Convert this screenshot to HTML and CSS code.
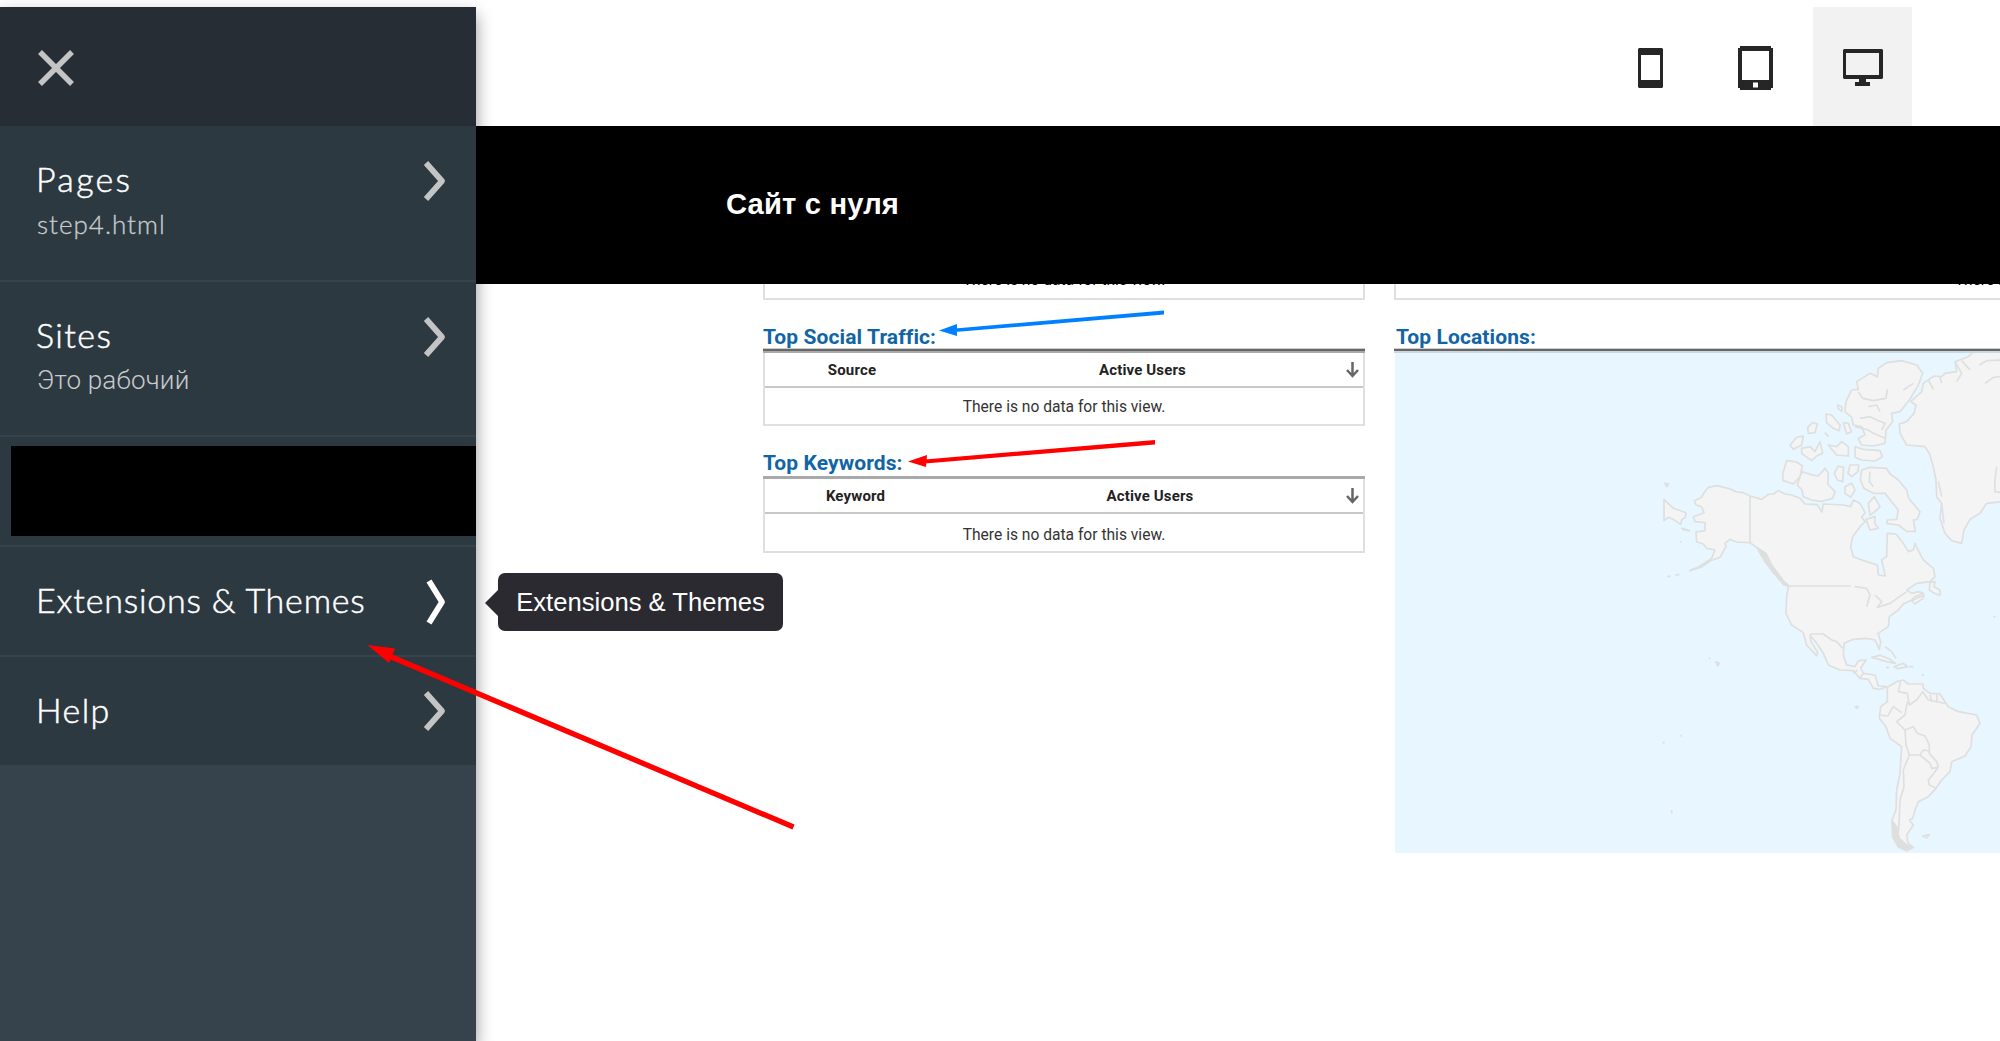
FILE: index.html
```html
<!DOCTYPE html>
<html lang="ru">
<head>
<meta charset="utf-8">
<title>Сайт с нуля</title>
<link rel="stylesheet" href="styles.css">
</head>
<body>
<div class="app">
  <aside class="sidebar">
    <div class="sidebar-head">
      <svg class="close" width="36" height="36" viewBox="0 0 36 36"><path d="M2 2 34 34M34 2 2 34"/></svg>
    </div>
    <nav class="menu">
      <a class="item tall">
        <span class="labels"><span class="name wide">Pages</span><span class="sub">step4.html</span></span>
        <svg class="chevron" width="24" height="42" viewBox="0 0 24 42"><path d="M3 3 19 21 3 39"/></svg>
      </a>
      <a class="item tall second">
        <span class="labels"><span class="name sites">Sites</span><span class="sub cyr">Это рабочий</span></span>
        <svg class="chevron" width="24" height="42" viewBox="0 0 24 42"><path d="M3 3 19 21 3 39"/></svg>
      </a>
      <div class="item blocked"><div class="block"></div></div>
      <a class="item current">
        <span class="name">Extensions &amp; Themes</span>
        <svg class="chevron" width="24" height="48" viewBox="0 0 24 48"><path d="M6 4 19 25 6 46"/></svg>
      </a>
      <a class="item last">
        <span class="name sites">Help</span>
        <svg class="chevron" width="24" height="42" viewBox="0 0 24 42"><path d="M3 3 19 21 3 39"/></svg>
      </a>
    </nav>
  </aside>

  <main class="main">
    <div class="toolbar">
      <div class="device phone"><svg width="25" height="40" viewBox="0 0 25 40"><path fill-rule="evenodd" d="M1 0H24L25 1V39L24 40H1L0 39V1ZM3 7V32H22V7Z"/></svg></div>
      <div class="device tablet"><svg width="35" height="44" viewBox="0 0 35 44"><path fill-rule="evenodd" d="M2 0H33V2H35V42H33V44H2V42H0V2H2ZM4 5V34H31V5ZM15 36.500V41.500H20V36.500Z"/></svg></div>
      <div class="device desktop"><svg width="40" height="37" viewBox="0 0 40 37"><path fill-rule="evenodd" d="M1 0H39L40 1V29L39 30H23V33H27V37H12V33H16V30H1L0 29V1ZM3 4V26H36V4Z"/></svg></div>
    </div>
    <header class="site-header"><h1>Сайт с нуля</h1></header>
    <div class="report">
      <div class="column">
        <div class="card cut"><p>There is no data for this view.</p></div>
        <h2>Top Social Traffic:</h2>
        <div class="card">
          <div class="rule dark"></div>
          <div class="row head"><span class="c1">Source</span><span class="c2">Active Users</span><svg width="13" height="16" viewBox="0 0 13 16"><path d="M6.500 0V14M1 8 6.500 14 12 8"/></svg></div>
          <div class="row">There is no data for this view.</div>
        </div>
        <h2 class="lower">Top Keywords:</h2>
        <div class="card">
          <div class="rule"></div>
          <div class="row head"><span class="c1 keyword">Keyword</span><span class="c2 shifted">Active Users</span><svg width="13" height="16" viewBox="0 0 13 16"><path d="M6.500 0V14M1 8 6.500 14 12 8"/></svg></div>
          <div class="row tall-row">There is no data for this view.</div>
        </div>
      </div>
      <div class="column places">
        <div class="card cut"><p>There is no data for this view.</p></div>
        <h2>Top Locations:</h2>
        <div class="map-rule"></div>
        <svg class="map" width="605" height="500" viewBox="1395 353 605 500">
          <g transform="translate(1640 330) scale(.33333)">
            <!-- North and Central America -->
            <path d="M330 498 310 488 290 486 265 475 230 467 205 472 192 488 185 502 163 512 168 525 185 530 192 548 160 560 165 575 195 578 195 602 168 606 170 635 190 642 200 655 225 660 215 685 180 708 150 722 185 711 212 692 240 682 258 650 255 640 270 628 290 636 330 638 350 652 375 675 390 700 415 735 445 772 440 800 438 850 455 885 490 908 500 945 530 977 533 968 513 935 510 915 530 940 550 970 565 1005 600 1020 640 1022 660 1045 685 1048 700 1075 720 1078 740 1070 715 1068 705 1035 670 1030 662 1014 678 990 655 992 645 1010 620 1005 610 975 612 940 640 928 680 925 705 930 718 958 722 935 714 910 745 890 748 860 775 840 790 822 815 810 825 800 850 790 835 785 815 790 800 780 830 760 870 755 885 740 880 715 850 690 835 662 825 640 820 660 805 665 790 640 768 612 742 610 740 680 725 690 736 738 715 735 712 705 680 695 640 680 632 650 638 620 660 590 675 575 665 562 675 548 660 520 640 510 632 530 610 525 550 522 546 546 532 524 495 522 480 505 455 495 435 492 415 482 400 492 385 493 365 508Z"/>
            <!-- Arctic islands -->
            <path d="M440 392 470 396 487 408 480 440 460 462 430 452 428 432Z"/>
            <path d="M487 425 510 433 535 438 555 415 565 430 563 462 585 485 578 505 545 514 515 510 490 500 486 480 472 465 480 440Z"/>
            <path d="M583 430 595 408 611 412 608 455 592 450ZM630 405 656 405 654 425 635 440 624 430ZM615 470 635 460 645 480 632 502 615 490Z"/>
            <path d="M665 420 690 412 740 415 750 432 775 450 800 480 806 505 840 545 832 568 820 570 826 604 800 604 775 585 740 580 742 570 770 568 775 540 755 515 735 490 700 490 672 475 661 450ZM690 425 688 455 700 470"/>
            <path d="M650 155 690 130 712 140 715 115 740 98 785 92 830 105 848 130 835 165 808 210 780 245 755 250 758 275 738 300 735 340 700 348 665 345 655 325 675 315 665 290 640 285 635 262 615 245 618 215 635 180 655 178Z"/>
            <path d="M655 185 668 205 700 212 738 205 742 178M685 230 710 225 720 245M660 265 690 260 710 270 735 280 725 300M645 290 685 300 700 310 735 325M790 180 820 160" class="border"/>
            <path d="M645 350 670 358 720 362 727 380 705 393 665 390 645 382Z"/>
            <path d="M558 252 575 255 600 285 598 302 580 295 560 278ZM610 278 625 280 634 305 620 312ZM517 278 532 282 525 308 505 310 503 293ZM450 345 470 322 490 318 485 345 460 358ZM485 355 510 350 525 365 540 335 548 370 530 378 515 392 485 370ZM565 345 590 350 605 335 625 350 625 378 590 375ZM593 225 607 232 605 244 595 236ZM554 308 566 320"/>
            <path d="M678 568 705 560 704 580 715 595 690 600ZM703 500 720 530 705 545 690 555 685 520ZM870 757 885 755 882 770 900 780 900 796 880 788 868 780ZM815 812 852 795 848 806 825 822Z"/>
            <!-- Greenland -->
            <path d="M1084 62 1000 65 985 80 945 95 950 125 915 130 905 140 882 138 850 160 845 185 812 215 828 225 822 250 800 275 778 282 780 310 800 345 855 350 868 370 880 410 888 450 890 500 905 520 900 565 915 610 935 632 965 640 972 600 990 568 1020 550 1040 520 1084 515Z"/>
            <path d="M1018 105 1040 92 1084 90M1035 160 1060 142 1084 140M1070 410 1065 450 1064 485 1084 488M945 95 965 130 950 155M965 92 990 120M865 150 880 178M900 142 905 160M895 455 905 500M905 520 912 580" class="border"/>
            <!-- Aleutians and Pacific islands -->
            <path d="M72 508 100 535 138 548 136 562 125 570 122 583 100 568 85 562 72 572ZM75 460 86 462 80 470ZM125 595 148 602 132 600ZM82 740 92 738M105 735 118 734M120 636H126M148 723 160 716"/>
            <path d="M228 995 238 1000 233 1008ZM206 985H211M646 1130 655 1130 651 1135ZM121 1217H126M68 1237 74 1238M95 1440V1450M1060 858 1066 861M848 1518 868 1514 860 1524Z"/>
            <!-- Caribbean -->
            <path d="M696 982 720 976 750 988 766 1000 740 995ZM762 1010 790 1000 802 1010 775 1016ZM738 1012 748 1013M806 1010H820M845 1034 852 1036M735 950 755 965 768 985"/>
            <!-- South America -->
            <path d="M742 1072 770 1055 790 1050 805 1062 848 1062 850 1075 870 1090 900 1092 918 1120 925 1130 955 1145 1010 1155 1020 1180 996 1215 993 1250 975 1278 935 1295 930 1325 905 1350 888 1375 865 1400 835 1415 825 1440 818 1465 808 1470 820 1485 800 1515 804 1540 820 1552 800 1562 775 1550 758 1520 756 1470 768 1440 770 1380 780 1330 785 1250 750 1225 738 1190 718 1165 722 1130 742 1115Z"/>
            <path class="border" d="M330 498V638M445 768H632M510 912 550 912 575 930 590 935 608 955M645 770 680 775 690 795 680 830M705 795 725 815 712 832 750 820 800 785M640 1030 652 1020M670 1030 660 1045M782 1055 775 1085 802 1090 808 1125 830 1110 848 1085 865 1110 915 1120M802 1115 795 1155 770 1175 795 1200 820 1190 832 1210 855 1218 868 1245 868 1270 890 1295 895 1310 882 1330 865 1350 868 1365 888 1375M742 1160 760 1130 785 1148M722 1155 740 1158M795 1200 798 1245 808 1275 790 1320 792 1370 780 1410 778 1460 775 1510M808 1275 840 1275 870 1300 875 1315 892 1312M840 1275 850 1260 868 1263M870 1095 875 1115M890 1095 892 1115"/>
            <path d="M758 1475 770 1490 778 1525 800 1545 818 1552 800 1562 775 1550 758 1520ZM350 652 378 670 395 705 432 755 447 768 432 765 400 728 375 695Z" class="fjords"/>
          </g>
        </svg>
      </div>
    </div>
  </main>

  <div class="tooltip">Extensions &amp; Themes</div>
  <svg class="arrows" width="2000" height="1041" viewBox="0 0 2000 1041">
    <path class="red" d="M793.500 827 388 655.500" stroke-width="5.300"/>
    <path class="red-head" d="M367.500 645 395 648.500 389 663Z"/>
    <path class="blue-head" d="M939 330.500 957 324 957 336ZM955 328.500 1164 310.500V314.500L955 332Z"/>
    <path class="red-head" d="M908 461.500 927 455 926 467ZM925 459.500 1155 440V444.500L925 463.500Z"/>
  </svg>
</div>
</body>
</html>
```
FILE: styles.css
```css
* { box-sizing: border-box; }
body { margin: 0; background: #fff; font-family: Roboto, "Liberation Sans", sans-serif; }
h1, h2, p { margin: 0; }
.app { position: relative; display: flex; width: 2000px; height: 1041px; padding-top: 7px; overflow: hidden; }

/* Sidebar */
.sidebar { width: 476px; flex: none; background: #36434c; box-shadow: 0 8px 16px rgba(0, 0, 0, .42); z-index: 1; }
.sidebar-head { height: 119px; background: #262d35; display: flex; align-items: center; padding: 3px 0 0 38px; }
.close { fill: none; stroke: #c4c4c4; stroke-width: 5.500; }
.item { display: flex; align-items: center; justify-content: space-between; height: 110px; padding: 0 29px 0 36px; background: #2d3941; border-bottom: 2px solid #36434c; color: #fff; }
.item.tall { height: 156px; align-items: flex-start; padding-top: 34px; }
.item.second { height: 155px; }
.item.blocked { padding: 0 0 0 11px; }
.block { width: 465px; height: 90px; background: #000; }
.item.last { height: 108px; border-bottom: 0; }
.labels { display: flex; flex-direction: column; margin-top: -3px; }
.name { font: 300 34px/44px Lato, sans-serif; letter-spacing: .8px; -webkit-text-stroke: .5px #fff; }
.item > .name { margin-top: -2px; }
.name.wide { letter-spacing: 2.300px; }
.name.sites { letter-spacing: 1.400px; }
.sub { font: 300 26px/34px Lato, sans-serif; letter-spacing: 1px; color: #c8cbcd; margin: 6px 0 0 1px; -webkit-text-stroke: .3px #c8cbcd; }
.sub.cyr { font-family: Roboto, sans-serif; letter-spacing: .2px; -webkit-text-stroke: 0; }
.chevron { fill: none; stroke: #c4c4c4; stroke-width: 5.800; stroke-linejoin: round; }
.current .chevron { stroke: #fff; }

/* Preview */
.main { flex: 1; min-width: 0; display: flex; flex-direction: column; }
.toolbar { height: 119px; display: flex; justify-content: flex-end; padding-right: 88px; }
.device { width: 105px; display: flex; align-items: center; justify-content: center; fill: #262626; padding-top: 3px; }
.device.tablet { width: 110px; padding-right: 5px; }
.device.desktop { width: 99px; background: #f2f2f2; padding-top: 2px; }
.site-header { position: relative; z-index: 2; height: 158px; background: #000; color: #fff; padding: 60px 0 0 250px; }
.site-header h1 { font: 700 29.200px/36px "Liberation Sans", Arial, sans-serif; letter-spacing: .15px; }

.report { display: flex; padding-left: 287px; gap: 29px; }
.column { width: 602px; flex: none; }
.column.places { width: 1324px; }
.card { border: 2px solid #dfdfdf; border-top: 0; }
.card.cut { height: 16px; overflow: hidden; display: flex; justify-content: center; font-size: 15.600px; line-height: 20px; }
.card.cut p { margin-top: -14.500px; }
.report h2 { font-size: 21px; font-weight: 700; line-height: 28px; color: #1165a5; height: 48px; padding-top: 23px; letter-spacing: .1px; white-space: nowrap; }
.report h2.lower { height: 50px; padding-top: 23px; }
.places h2 { padding-left: 2px; }
.rule { height: 3px; margin: 0 -2px; background: #a9a9a9; }
.rule.dark { height: 5px; background: linear-gradient(#ccc 1px, #666 1px 3px, #a9a9a9 3px); }
.row { height: 36px; display: flex; align-items: center; justify-content: center; font-size: 15.600px; color: #333; padding-top: 2px; }
.row.head { height: 35px; border-bottom: 2px solid #c8c8c8; justify-content: flex-start; font-weight: 700; font-size: 15px; letter-spacing: .15px; color: #222; padding-top: 1px; }
.row.tall-row { height: 37px; padding-top: 4px; }
.c1 { width: 174px; text-align: center; }
.c1.keyword { padding-left: 7px; }
.c2 { width: 407px; text-align: center; }
.c2.shifted { padding-left: 15px; }
.head svg { fill: none; stroke: #666; stroke-width: 2.500; }
.map-rule { height: 5px; background: linear-gradient(#ccc 1px, #666 1px 3px, #ccd8e0 3px); }
.map { display: block; background: #e8f6ff; margin-left: 1px; }
.map path { fill: #f4f4f4; stroke: #dedfdf; stroke-width: 5; stroke-linejoin: round; }
.map .border { fill: none; }
.map .fjords { fill: #dedede; }

/* Overlays */
.tooltip { position: absolute; left: 498px; top: 573px; width: 285px; height: 58px; z-index: 3; border-radius: 7px; background: #2b2a30; color: #fff; font: 25.600px/58px "Liberation Sans", Arial, sans-serif; text-align: center; white-space: nowrap; }
.tooltip::before { content: ""; position: absolute; left: -13px; top: 17px; border: solid transparent; border-width: 13px 13px 13px 0; border-right-color: #2b2a30; }
.arrows { position: absolute; left: 0; top: 0; z-index: 4; }
.red { stroke: #f00; }
.red-head { fill: #f00; }
.blue-head { fill: #0080ff; }
```
